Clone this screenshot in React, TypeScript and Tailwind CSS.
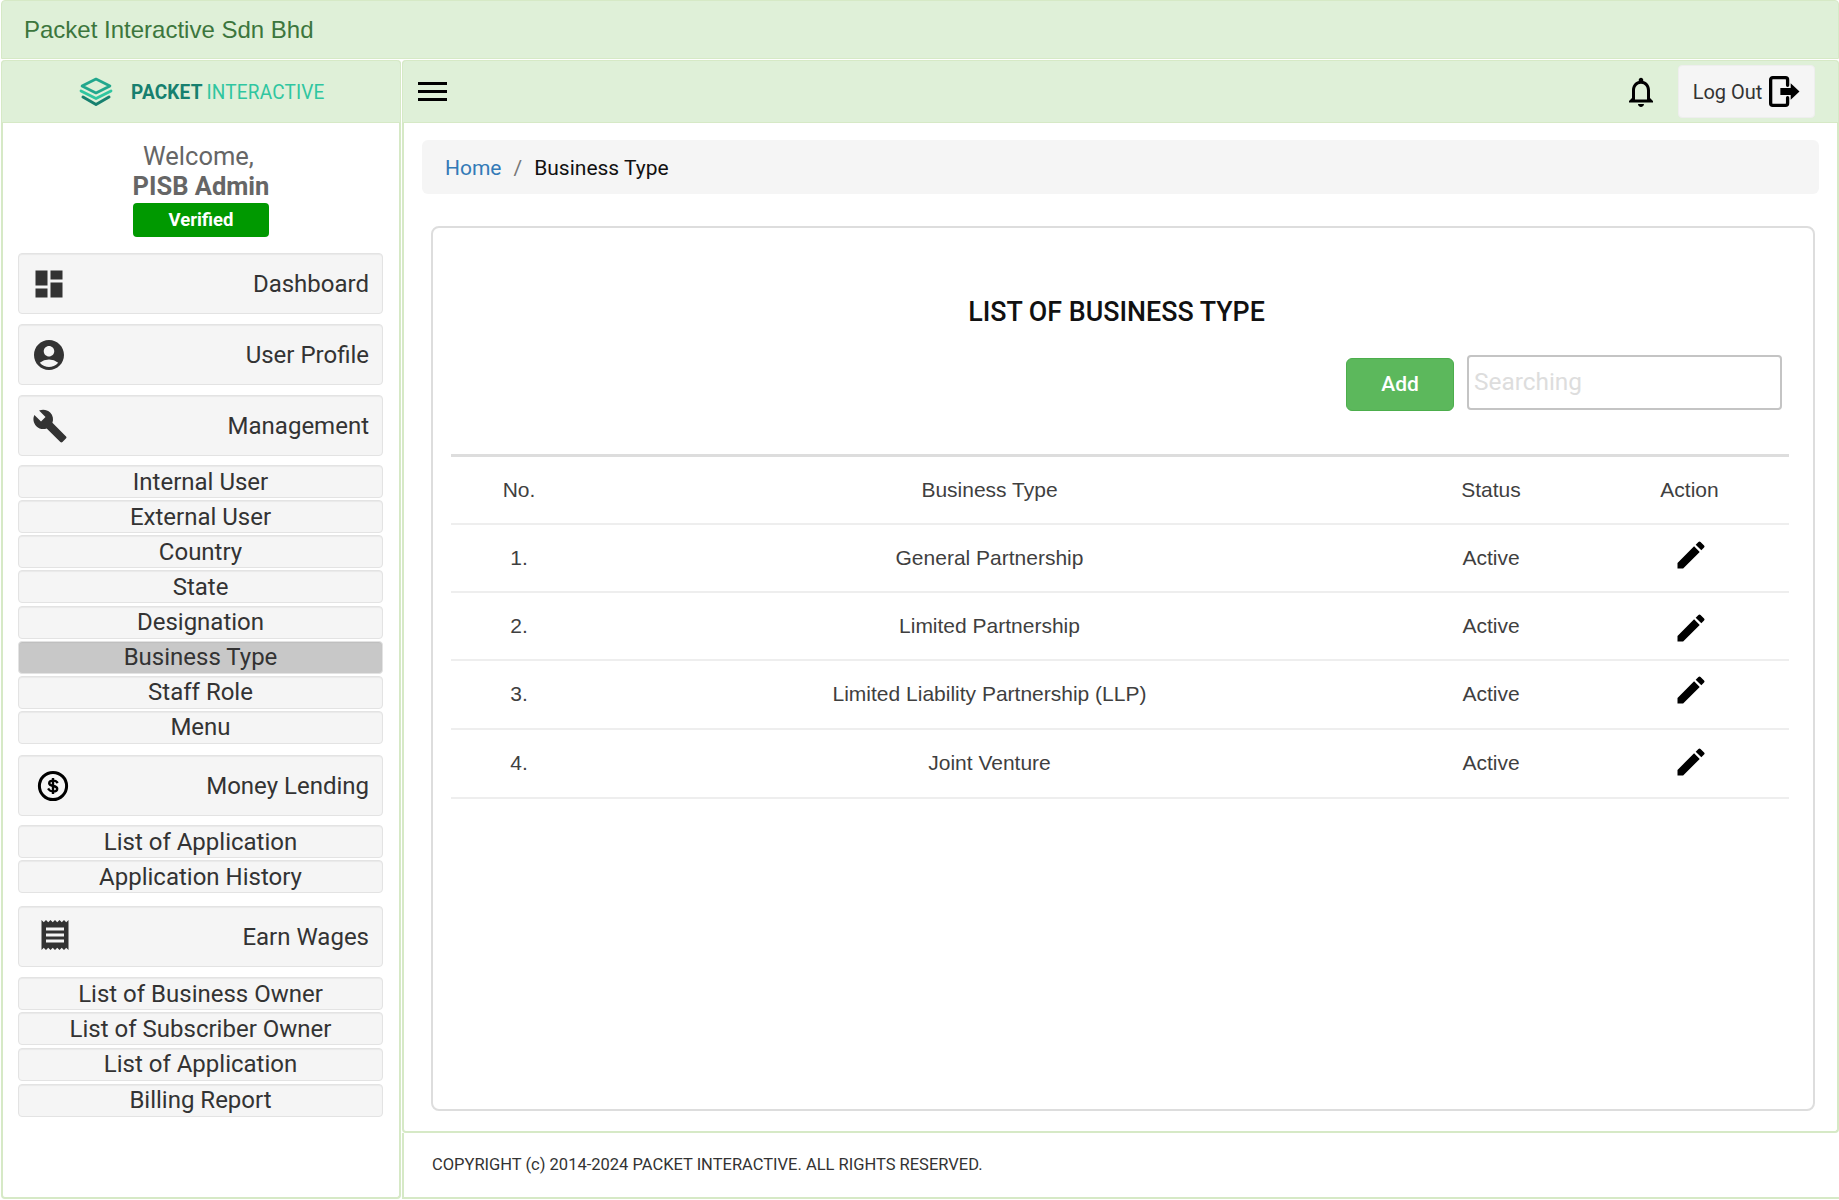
import React from "react";
import { MdDashboard, MdAccountCircle, MdBuild, MdReceipt, MdEdit, MdNotificationsNone } from "react-icons/md";

function Head({ icon, label, pad = "pl-[15px]", mb = "mb-[10px]" }: { icon: React.ReactNode; label: string; pad?: string; mb?: string }) {
  return (
    <div className={`h-[61px] ${mb} flex items-center justify-between ${pad} pr-[13px] bg-[#f5f5f5] border border-[#e3e3e3] rounded shadow-[inset_0_1px_1px_rgba(0,0,0,0.05)] text-[24px] text-[#333]`}>
      {icon}
      <span className="leading-none">{label}</span>
    </div>
  );
}

function Sub({ label, active = false }: { label: string; active?: boolean }) {
  return (
    <div className={`h-[33px] mb-[2.14px] flex items-center justify-center border border-[#e3e3e3] rounded shadow-[inset_0_1px_1px_rgba(0,0,0,0.05)] text-[24px] leading-none text-[#333] ${active ? "bg-[#c8c8c8]" : "bg-[#f5f5f5]"}`}>
      {label}
    </div>
  );
}

function Logo() {
  return (
    <svg width="38" height="30" viewBox="0 0 36 30" fill="none" className="shrink-0">
      <path d="M18 2 L32 9 L18 16 L4 9 Z" stroke="#22a78d" strokeWidth="2.6" strokeLinejoin="round" />
      <path d="M3 14 L18 21.5 L33 14" stroke="#2fc6a0" strokeWidth="2.8" strokeLinejoin="round" strokeLinecap="round" />
      <path d="M5 20 L18 27.5 L31 20" stroke="#17806f" strokeWidth="3" strokeLinejoin="round" strokeLinecap="round" />
    </svg>
  );
}

function LogoutIcon() {
  return (
    <svg width="31" height="31" viewBox="0 0 30 30" className="shrink-0">
      <path d="M18 9V3.6a2 2 0 0 0-2-2H3.6a2 2 0 0 0-2 2v22.8a2 2 0 0 0 2 2H16a2 2 0 0 0 2-2V21" fill="none" stroke="#000" strokeWidth="3.2" strokeLinecap="round" />
      <path d="M11 11.5h10V7l8.5 8-8.5 8v-4.5H11z" fill="#000" />
    </svg>
  );
}

function DollarIcon() {
  return (
    <svg width="32" height="32" viewBox="0 0 32 32" fill="none" stroke="#000" className="shrink-0">
      <circle cx="16" cy="16" r="13.6" strokeWidth="3" />
      <path d="M20 12.2c-.6-1-1.9-1.6-4-1.6-2.3 0-3.8 1-3.8 2.7 0 3.8 8 1.7 8 5.4 0 1.7-1.6 2.7-4.2 2.7-2.1 0-3.5-.7-4.2-1.9" strokeWidth="2.4" strokeLinecap="square" />
      <path d="M16 8v16" strokeWidth="2.4" />
    </svg>
  );
}

const rows = [
  { n: "1.", name: "General Partnership", off: "-mt-[5px]", h: "h-[68px]" },
  { n: "2.", name: "Limited Partnership", off: "mt-[5px]", h: "h-[68px]" },
  { n: "3.", name: "Limited Liability Partnership (LLP)", off: "-mt-[8px]", h: "h-[69px]" },
  { n: "4.", name: "Joint Venture", off: "-mt-[3px]", h: "h-[69px]" },
];

export default function App() {
  return (
    <div className="h-[1200px] w-full overflow-hidden bg-white font-['Roboto',sans-serif] flex flex-col">
      <div className="h-[59px] shrink-0 ml-px flex items-center pl-[22px] bg-[#dff0d8] border border-[#d6e9c6] rounded-t text-[24px] text-[#3c763d] font-['Liberation_Sans',sans-serif]">
        Packet Interactive Sdn Bhd
      </div>
      <div className="flex flex-1 mt-px pb-[1px] min-h-0">
        <aside className="w-[400px] ml-px mr-px shrink-0 border-2 border-[#d6e9c6] border-t-0 rounded flex flex-col">
          <div className="h-[63px] -mx-[2px] shrink-0 bg-[#dff0d8] border border-[#d6e9c6] rounded-t flex items-center pl-[75px] gap-[16px]">
            <Logo />
            <div className="origin-left scale-x-[0.95] whitespace-nowrap text-[20px] leading-none tracking-[0.2px] mt-[1px]">
              <span className="font-bold text-[#17806f]">PACKET</span>
              <span className="ml-[4px] font-normal text-[#2fc6a0]">INTERACTIVE</span>
            </div>
          </div>
          <div className="flex flex-col items-center pt-[18px] pb-[16px]">
            <div className="text-[25.5px] leading-[30px] text-[#666] -ml-[5px]">Welcome,</div>
            <div className="text-[25.5px] leading-[30px] font-bold text-[#666]">PISB Admin</div>
            <div className="w-[136px] h-[34px] mt-[2px] flex items-center justify-center rounded-sm bg-[#009900] text-white font-bold text-[18.5px] leading-none">Verified</div>
          </div>
          <nav className="pl-[15px] pr-[16px] flex flex-col">
            <Head icon={<MdDashboard size={36} />} label="Dashboard" pad="pl-[12px]" />
            <Head icon={<MdAccountCircle size={36} />} label="User Profile" pad="pl-[12px]" />
            <Head icon={<MdBuild size={36} />} label="Management" pad="pl-[13px]" mb="mb-[9px]" />
            {["Internal User", "External User", "Country", "State", "Designation"].map((s) => <Sub key={s} label={s} />)}
            <Sub label="Business Type" active />
            <Sub label="Staff Role" />
            <Sub label="Menu" />
            <div className="h-[9px]" />
            <Head icon={<DollarIcon />} label="Money Lending" pad="pl-[18px]" mb="mb-[9px]" />
            <Sub label="List of Application" />
            <Sub label="Application History" />
            <div className="h-[11px]" />
            <Head icon={<MdReceipt size={36} className="-mt-[4px]" />} label="Earn Wages" pad="pl-[18px]" />
            <Sub label="List of Business Owner" />
            <Sub label="List of Subscriber Owner" />
            <Sub label="List of Application" />
            <div className="h-[1px]" />
            <Sub label="Billing Report" />
          </nav>
        </aside>
        <main className="flex-1 min-w-0 flex flex-col">
          <div className="h-[1073px] shrink-0 border-2 border-t-0 border-[#d6e9c6] rounded flex flex-col">
            <div className="h-[63px] -mx-[2px] shrink-0 bg-[#dff0d8] border border-[#d6e9c6] rounded-t flex items-center justify-between pl-[15px] pr-[23px]">
              <div className="flex flex-col gap-[5px] w-[29px] -mt-[1px]">
                <div className="h-[3px] bg-black" />
                <div className="h-[3px] bg-black" />
                <div className="h-[3px] bg-black" />
              </div>
              <div className="flex items-center gap-[19px]">
                <MdNotificationsNone size={36} className="text-black" />
                <div className="w-[137px] h-[53px] flex items-center justify-center gap-[7px] bg-[#f5f5f5] border border-[#eee] rounded text-[20px] text-[#333]">
                  Log Out
                  <LogoutIcon />
                </div>
              </div>
            </div>
            <div className="flex-1 min-h-0 pl-[18px] pr-[18px] pt-[17px]">
              <div className="h-[54px] flex items-center pt-[4px] px-[23px] bg-[#f5f5f5] rounded-md text-[21px] text-[#111]">
                <span className="text-[#337ab7]">Home</span>
                <span className="mx-[12px] text-[#777]">/</span>
                <span>Business Type</span>
              </div>
              <div className="mt-[32px] ml-[9px] mr-[4px] h-[885px] border-2 border-[#ddd] rounded-lg pl-[18px] pr-[24px] flex flex-col">
                <h1 className="mt-[68px] pr-[7px] text-center text-[26.8px] leading-[32px] font-medium text-[#111]">LIST OF BUSINESS TYPE</h1>
                <div className="mt-[27px] flex justify-end items-start pr-[7px]">
                  <button className="w-[108px] h-[53px] mt-[3px] bg-[#5cb85c] rounded-md text-white text-[21px] font-medium border border-[#4cae4c]">Add</button>
                  <input placeholder="Searching" className="w-[315px] h-[55px] ml-[13px] px-[5px] pb-[2px] border-2 border-[#c4c4c4] rounded-sm text-[24.4px] outline-none placeholder:text-[#ddd]" />
                </div>
                <table className="mt-[43px] w-full table-fixed border-t-[3px] border-[#ddd] font-['Liberation_Sans',sans-serif] text-[21px] text-[#3f3f3f]">
                  <colgroup>
                    <col className="w-[136px]" />
                    <col />
                    <col className="w-[198px]" />
                    <col className="w-[199px]" />
                  </colgroup>
                  <thead>
                    <tr className="h-[68px] border-b-2 border-[#eee]">
                      <th className="font-normal">No.</th>
                      <th className="font-normal">Business Type</th>
                      <th className="font-normal">Status</th>
                      <th className="font-normal">Action</th>
                    </tr>
                  </thead>
                  <tbody>
                    {rows.map((r) => (
                      <tr key={r.n} className={`${r.h} border-b-2 border-[#eee] text-center`}>
                        <td>{r.n}</td>
                        <td>{r.name}</td>
                        <td>Active</td>
                        <td><div className="flex justify-center pl-[2px]"><MdEdit size={36} color="#000" className={r.off} /></div></td>
                      </tr>
                    ))}
                  </tbody>
                </table>
              </div>
            </div>
          </div>
          <div className="flex-1 border-l-2 border-b-2 border-[#d6e9c6] flex items-center pl-[28px] text-[16.5px] text-[#333]">
            COPYRIGHT (c) 2014-2024 PACKET INTERACTIVE. ALL RIGHTS RESERVED.
          </div>
        </main>
      </div>
    </div>
  );
}
